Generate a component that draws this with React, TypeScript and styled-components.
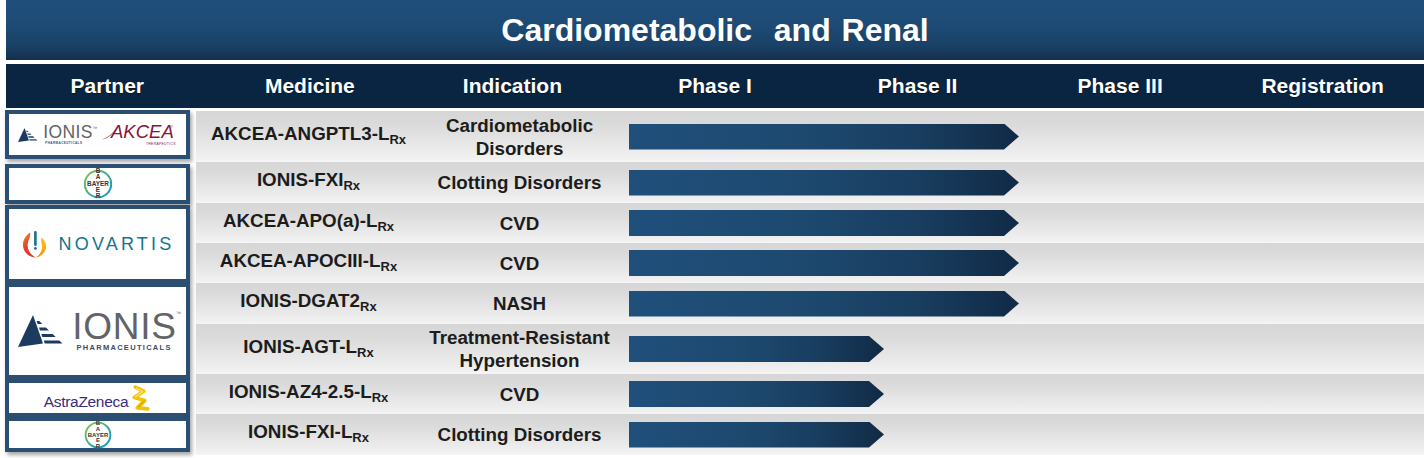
import React from "react";
import styled, { createGlobalStyle } from "styled-components";

const Global = createGlobalStyle`
  html, body { margin: 0; padding: 0; background: #ffffff; }
  body { font-family: "Liberation Sans", Arial, sans-serif; }
`;

const Page = styled.div`
  width: 1424px;
  height: 458px;
  overflow: hidden;
  display: flex;
  flex-direction: column;
`;

const TitleBar = styled.div`
  margin-left: 6px;
  height: 60px;
  background: linear-gradient(180deg, #1f4f7b 0%, #1e4b76 40%, #1a4167 75%, #14304e 100%);
  display: flex;
  align-items: center;
  justify-content: center;
  color: #ffffff;
  font-weight: 700;
  font-size: 32px;
  word-spacing: 2px;
`;

const HeaderRow = styled.div`
  margin: 4px 0 0 6px;
  height: 44px;
  background: #0a2541;
  display: grid;
  grid-template-columns: repeat(7, 1fr);
  align-items: center;
`;

const HeaderCell = styled.div`
  text-align: center;
  color: #ffffff;
  font-weight: 700;
  font-size: 21px;
  text-shadow: 0 1px 1px rgba(0, 0, 0, 0.4);
`;

const Body = styled.div`
  margin-top: 3px;
  display: grid;
  grid-template-columns: 196px 1fr;
  grid-template-rows: 51px 41px 40px 40px 41px 50px 40px 41px;
`;

const PartnerBox = styled.div<{ $row: string; $mt: number; $mb: number }>`
  grid-column: 1;
  grid-row: ${(p) => p.$row};
  margin: ${(p) => p.$mt}px 6px ${(p) => p.$mb}px 5px;
  border: 4px solid #2b4f72;
  background: #ffffff;
  box-shadow: 2px 3px 4px rgba(0, 0, 0, 0.35);
  display: flex;
  align-items: center;
  justify-content: center;
  position: relative;
  z-index: 1;
`;

const DataRow = styled.div<{ $row: number }>`
  grid-column: 2;
  grid-row: ${(p) => p.$row};
  display: grid;
  grid-template-columns: 203px 219px 1fr;
  padding-left: 11px;
  align-items: center;
  background: linear-gradient(180deg, #d6d6d6 0%, #dadada 25%, #e4e4e4 55%, #ececec 80%, #f2f2f2 96%, #f7f7f7 100%);
`;

const TextCell = styled.div`
  text-align: center;
  font-weight: 700;
  font-size: 18.8px;
  line-height: 23px;
  color: #1c1c1c;
`;

const Sub = styled.span`
  font-size: 13px;
  vertical-align: -4px;
`;

const BarTrack = styled.div`
  display: flex;
  align-items: center;
`;

const Bar = styled.div<{ $w: number }>`
  width: ${(p) => p.$w}px;
  height: 26px;
  background: linear-gradient(90deg, #1f4f7b 0%, #1d496f 45%, #183d5f 75%, #112a45 100%);
  clip-path: polygon(0 0, calc(100% - 15px) 0, 100% 50%, calc(100% - 15px) 100%, 0 100%);
`;

/* ---------- logos ---------- */

const LogoRow = styled.div<{ $gap: number }>`
  display: flex;
  align-items: center;
  gap: ${(p) => p.$gap}px;
`;

const IonisWords = styled.div`
  display: flex;
  flex-direction: column;
  align-items: flex-start;
`;

const IonisWord = styled.span<{ $size: number }>`
  font-family: "Liberation Sans", Arial, sans-serif;
  font-size: ${(p) => p.$size}px;
  line-height: ${(p) => Math.round(p.$size * 0.95)}px;
  color: #616367;
  letter-spacing: ${(p) => p.$size * 0.02}px;
  position: relative;
`;

const Tm = styled.span`
  font-size: 5px;
  position: absolute;
  top: 2px;
  right: -5px;
  line-height: 5px;
`;

const Pharma = styled.span<{ $size: number; $ls: number }>`
  font-weight: 700;
  font-size: ${(p) => p.$size}px;
  line-height: ${(p) => p.$size + 1}px;
  letter-spacing: ${(p) => p.$ls}px;
  color: #3a4d66;
  margin-left: 4%;
`;

const NovartisWord = styled.span`
  font-family: "Liberation Sans", Arial, sans-serif;
  font-size: 18px;
  letter-spacing: 3.2px;
  color: #13758c;
`;

const AzWord = styled.span`
  font-size: 15.5px;
  color: #3b2a82;
  letter-spacing: -0.3px;
  margin-top: 8px;
`;

const IonisMark = ({ w }: { w: number }) => (
  <svg width={w} height={(w * 32) / 48} viewBox="0 0 48 32">
    <polygon points="15,0 0,32 25,28.5" fill="#1d3a5f" />
    <polygon points="18.6,6 21.2,6 24.3,9 19.7,9" fill="#1d3a5f" />
    <polygon points="21,12.5 27.9,12.5 31,15.5 22,15.5" fill="#1d3a5f" />
    <polygon points="23.3,19 34.6,19 37.7,22 24.4,22" fill="#1d3a5f" />
    <polygon points="25.8,25.5 41.3,25.5 44.4,28.5 26.7,28.5" fill="#1d3a5f" />
  </svg>
);

const AkceaLogo = () => (
  <svg width="76" height="26" viewBox="0 0 76 26">
    <path d="M1 17.5 C 6 16, 10 13, 14 8 L 17 4 L 15.5 6.5 C 12 12, 7 16.5, 1 17.5 Z" fill="#8a1538" />
    <text x="10" y="16" fontFamily="Liberation Sans, Arial, sans-serif" fontStyle="italic" fontSize="18.5" fill="#8a1538">
      AKCEA
    </text>
    <text x="70" y="6" fontFamily="Liberation Sans, Arial, sans-serif" fontSize="3" fill="#8a1538">
      ®
    </text>
    <text x="45" y="23" fontFamily="Liberation Sans, Arial, sans-serif" fontSize="3.4" fill="#8a1538" letterSpacing="0.3">
      THERAPEUTICS
    </text>
  </svg>
);

const BayerLogo = ({ size, id }: { size: number; id: string }) => {
  const v = ["B", "A", "Y", "E", "R"];
  return (
    <svg width={size} height={size} viewBox="0 0 32 32">
      <defs>
        <linearGradient id={id} x1="0" y1="0" x2="1" y2="1">
          <stop offset="0" stopColor="#8cc63f" />
          <stop offset="0.5" stopColor="#3fae8a" />
          <stop offset="1" stopColor="#0a8fd1" />
        </linearGradient>
      </defs>
      <circle cx="16" cy="16" r="13.2" fill="#ffffff" stroke={`url(#${id})`} strokeWidth="2" />
      <text x="16" y="18.3" textAnchor="middle" fontFamily="Liberation Sans, Arial, sans-serif" fontWeight="700" fontSize="6.4" fill="#333333">
        BAYER
      </text>
      {v.map((l, i) =>
        i === 2 ? null : (
          <text key={l + i} x="16" y={5.2 + i * 6.2} textAnchor="middle" fontFamily="Liberation Sans, Arial, sans-serif" fontWeight="700" fontSize="6.4" fill="#333333">
            {l}
          </text>
        )
      )}
    </svg>
  );
};

const NovartisFlame = () => (
  <svg width="28" height="28" viewBox="0 0 28 28">
    <defs>
      <linearGradient id="nvLeft" x1="0" y1="0" x2="0.6" y2="1">
        <stop offset="0" stopColor="#f29a1f" />
        <stop offset="0.5" stopColor="#e8432a" />
        <stop offset="1" stopColor="#e3352a" />
      </linearGradient>
      <linearGradient id="nvRight" x1="1" y1="0" x2="0.3" y2="1">
        <stop offset="0" stopColor="#fcc430" />
        <stop offset="1" stopColor="#f39200" />
      </linearGradient>
    </defs>
    <path d="M9 2.5 C 1 8, 0 17, 5 23 C 8 26.5, 12.5 27.5, 14.5 27.5 C 8.5 24, 5.5 18.5, 7 12.5 C 7.8 9, 10 6, 9 2.5 Z" fill="url(#nvLeft)" />
    <path d="M20.5 7.5 C 27 13, 26.5 21, 20.5 25 C 18 26.8, 16 27.5, 14.5 27.5 C 19.5 24.5, 22 19.5, 20.8 14.5 C 20.2 12, 19.8 9.8, 20.5 7.5 Z" fill="url(#nvRight)" />
    <rect x="13.1" y="1" width="2.6" height="15" rx="1.2" fill="#1a6f94" />
    <circle cx="14.4" cy="18.4" r="1.4" fill="#1a6f94" />
  </svg>
);

const AzMark = () => (
  <svg width="23" height="27" viewBox="0 0 22 26">
    <path d="M7 2 L15 6 L6 12 L16 15 L9 22 L19 23" fill="none" stroke="#f2c300" strokeWidth="3.6" strokeLinejoin="round" strokeLinecap="round" />
    <path d="M8 3 L14 6.3 L7 11.5" fill="none" stroke="#fbe27a" strokeWidth="1.2" strokeLinecap="round" />
    <path d="M16 15 L10 21" fill="none" stroke="#d9a400" strokeWidth="1.2" strokeLinecap="round" />
  </svg>
);

/* ---------- data ---------- */

type RowData = { med: string; ind: string[]; bar: number };

const rows: RowData[] = [
  { med: "AKCEA-ANGPTL3-L", ind: ["Cardiometabolic", "Disorders"], bar: 390 },
  { med: "IONIS-FXI", ind: ["Clotting Disorders"], bar: 390 },
  { med: "AKCEA-APO(a)-L", ind: ["CVD"], bar: 390 },
  { med: "AKCEA-APOCIII-L", ind: ["CVD"], bar: 390 },
  { med: "IONIS-DGAT2", ind: ["NASH"], bar: 390 },
  { med: "IONIS-AGT-L", ind: ["Treatment-Resistant", "Hypertension"], bar: 255 },
  { med: "IONIS-AZ4-2.5-L", ind: ["CVD"], bar: 255 },
  { med: "IONIS-FXI-L", ind: ["Clotting Disorders"], bar: 255 },
];

const headers = ["Partner", "Medicine", "Indication", "Phase I", "Phase II", "Phase III", "Registration"];

export default function App() {
  return (
    <>
      <Global />
      <Page>
        <TitleBar>Cardiometabolic&nbsp; and Renal</TitleBar>
        <HeaderRow>
          {headers.map((h) => (
            <HeaderCell key={h}>{h}</HeaderCell>
          ))}
        </HeaderRow>
        <Body>
          <PartnerBox $row="1" $mt={-1} $mb={3}>
            <LogoRow $gap={8}>
              <LogoRow $gap={4}>
                <IonisMark w={21} />
                <IonisWords>
                  <IonisWord $size={17.5}>
                    IONIS<Tm>™</Tm>
                  </IonisWord>
                  <Pharma $size={3} $ls={0.45}>PHARMACEUTICALS</Pharma>
                </IonisWords>
              </LogoRow>
              <AkceaLogo />
            </LogoRow>
          </PartnerBox>
          <PartnerBox $row="2" $mt={2} $mb={-1}>
            <BayerLogo size={32} id="bayerA" />
          </PartnerBox>
          <PartnerBox $row="3 / span 2" $mt={2} $mb={0}>
            <LogoRow $gap={10}>
              <NovartisFlame />
              <NovartisWord>NOVARTIS</NovartisWord>
            </LogoRow>
          </PartnerBox>
          <PartnerBox $row="5 / span 2" $mt={0} $mb={-5}>
            <LogoRow $gap={6}>
              <IonisMark w={48} />
              <IonisWords>
                <IonisWord $size={37}>
                  IONIS<Tm>™</Tm>
                </IonisWord>
                <Pharma $size={7.5} $ls={1.3}>PHARMACEUTICALS</Pharma>
              </IonisWords>
            </LogoRow>
          </PartnerBox>
          <PartnerBox $row="7" $mt={5} $mb={-3}>
            <LogoRow $gap={0}>
              <AzWord>AstraZeneca</AzWord>
              <AzMark />
            </LogoRow>
          </PartnerBox>
          <PartnerBox $row="8" $mt={3} $mb={3}>
            <BayerLogo size={30} id="bayerB" />
          </PartnerBox>

          {rows.map((r, i) => (
            <DataRow key={r.med} $row={i + 1}>
              <TextCell>
                {r.med}
                <Sub>Rx</Sub>
              </TextCell>
              <TextCell>
                {r.ind.map((l) => (
                  <div key={l}>{l}</div>
                ))}
              </TextCell>
              <BarTrack>
                <Bar $w={r.bar} />
              </BarTrack>
            </DataRow>
          ))}
        </Body>
      </Page>
    </>
  );
}
